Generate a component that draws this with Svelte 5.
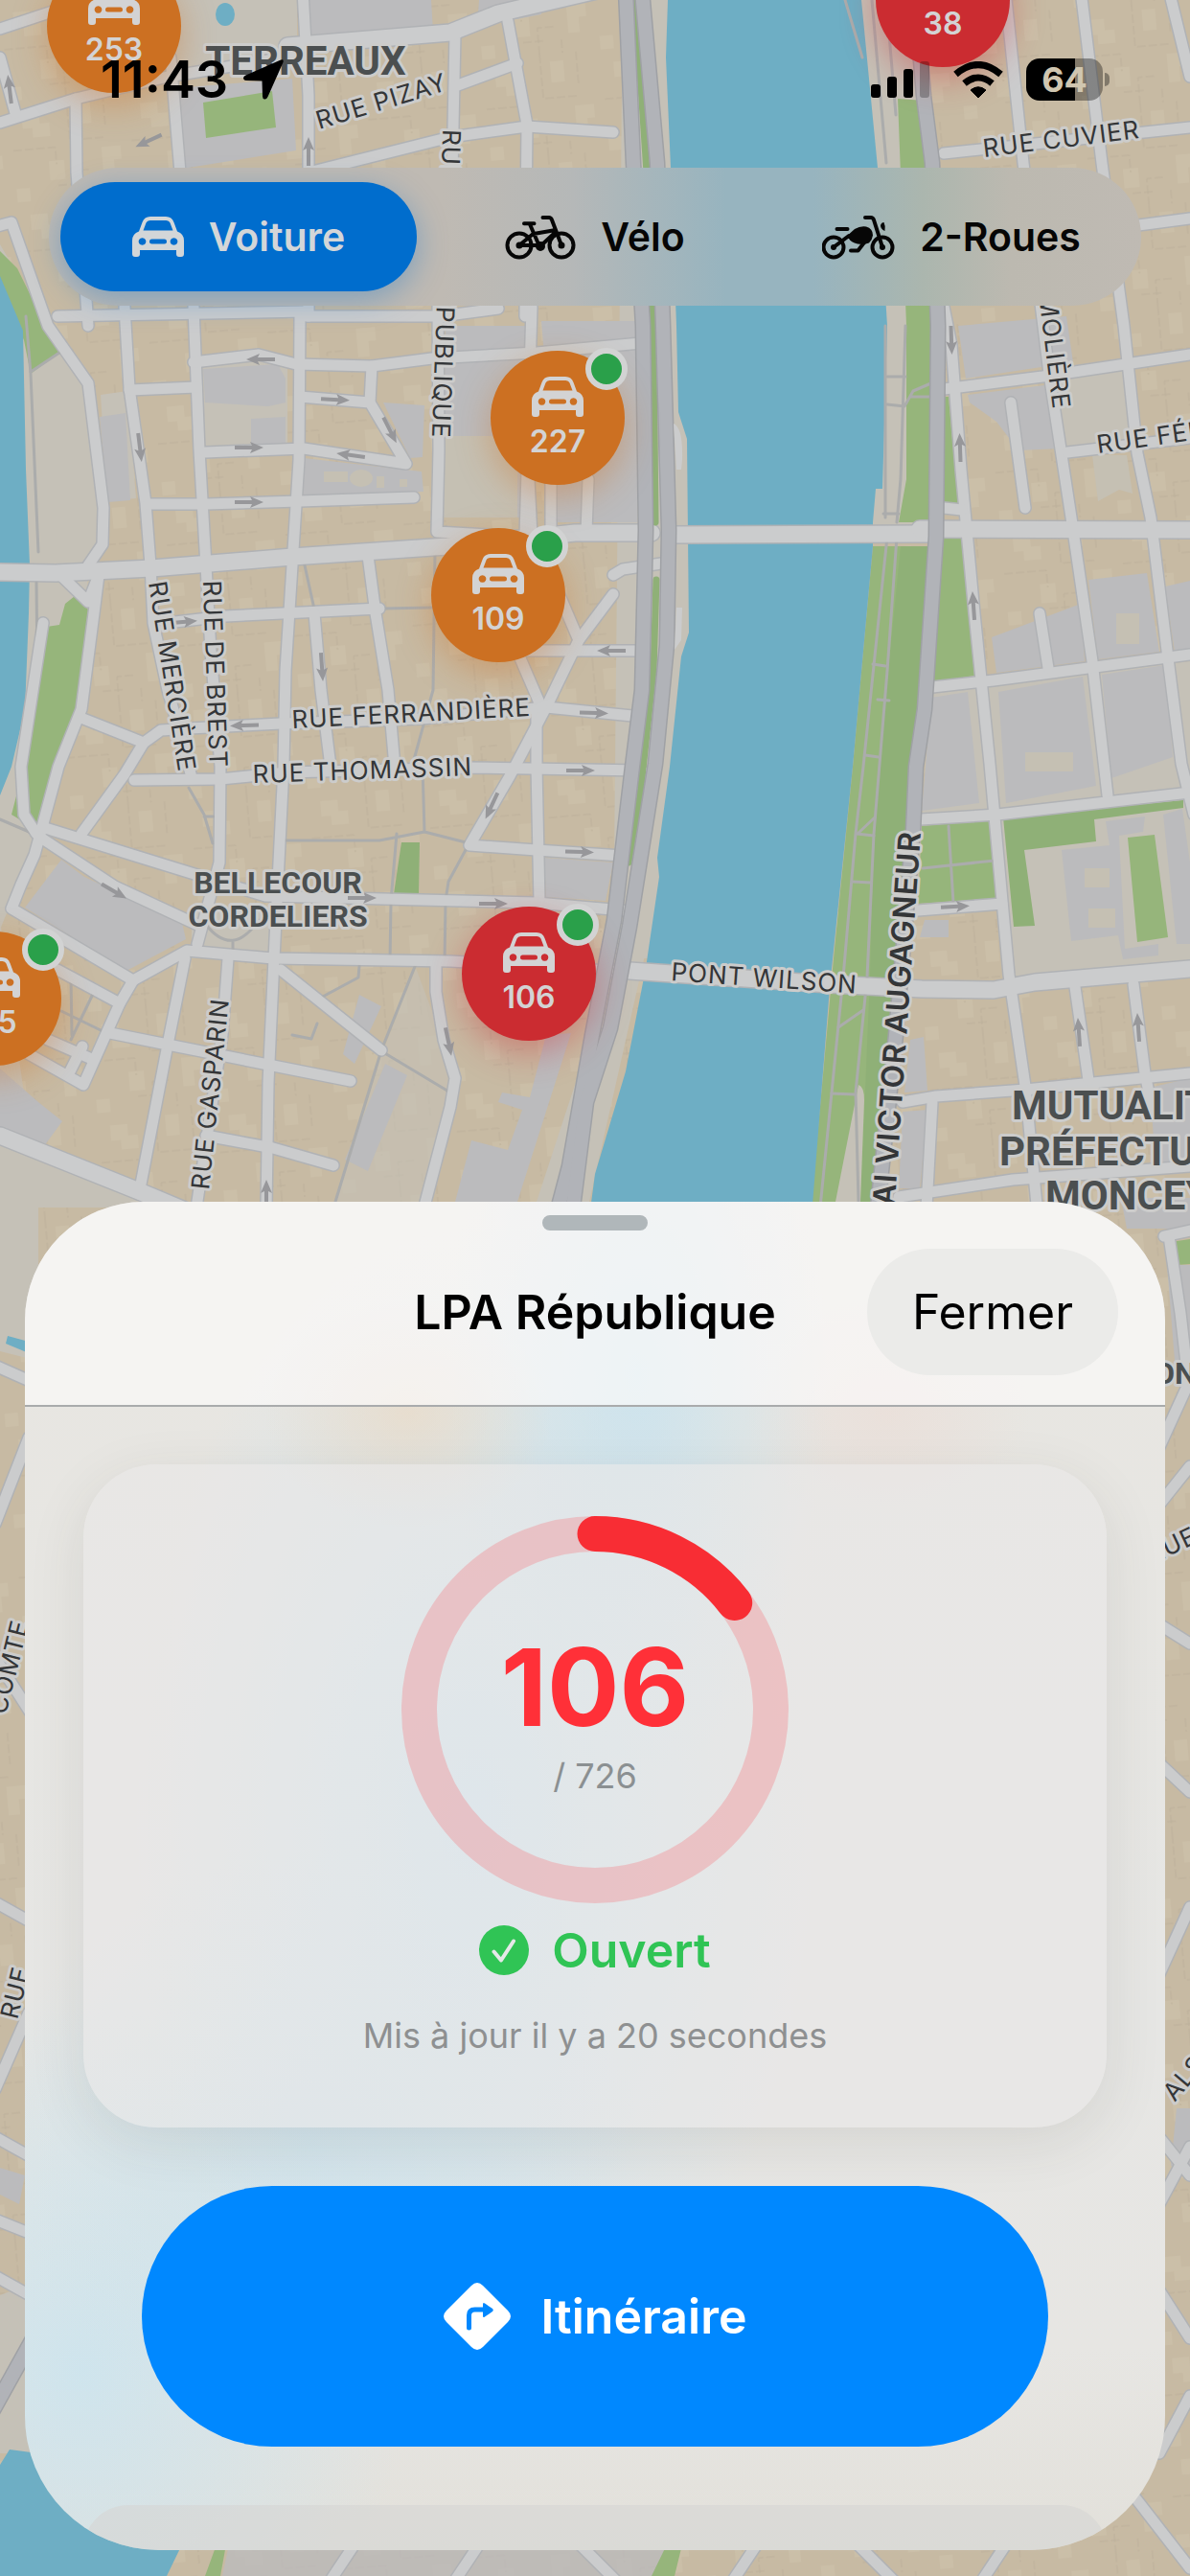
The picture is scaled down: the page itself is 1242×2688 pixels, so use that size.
<script lang="ts">
	/**
	 * Parking screen: city map with live pins, vehicle switcher and detail sheet
	 */

	type PinTone = 'orange' | 'red';

	interface Pin {
		x: number;
		y: number;
		free: number;
		tone: PinTone;
		open: boolean;
	}

	interface Label {
		text: string;
		x: number;
		y: number;
		angle?: number;
		kind?: 'street' | 'avenue' | 'district' | 'quarter';
		anchor?: 'start' | 'end' | 'middle';
	}

	const MAP_WIDTH = 1242;
	const MAP_HEIGHT = 2688;

	const parking = { name: 'LPA République', free: 106, total: 726, updated: 'Mis à jour il y a 20 secondes' };

	const modes = [
		{ id: 'car', label: 'Voiture' },
		{ id: 'bike', label: 'Vélo' },
		{ id: 'moto', label: '2-Roues' }
	];

	let mode = $state('car');

	const share = $derived((parking.free / parking.total) * 100);

	const pins: Pin[] = [
		{ x: 119, y: 27, free: 253, tone: 'orange', open: false },
		{ x: 984, y: 0, free: 38, tone: 'red', open: false },
		{ x: 582, y: 436, free: 227, tone: 'orange', open: true },
		{ x: 520, y: 621, free: 109, tone: 'orange', open: true },
		{ x: 552, y: 1016, free: 106, tone: 'red', open: true },
		{ x: -6, y: 1042, free: 115, tone: 'orange', open: true }
	];

	// Two-way streets, widest first
	const wide = [
		'M0 597 58 598 158 593 305 581 467 570 600 556 680 556',
		'M700 558 971 557',
		'M960 552 1242 553',
		'M0 1185 145 1243 200 1266',
		'M300 48 470 34 520 14 640-14',
		'M657 1013 866 1027 962 1032 1037 1033 1080 1025 1242 1011'
	];

	const streets = [
		'M-10 238 12 232 50 340 92 400 108 530 107 568 92 590',
		'M60 597 92 628 103 600 98 640 85 740 61 800 44 863 36 892 22 923 12 948 139 1023 195 992 285 1000 470 1003 560 1008 650 1014',
		'M45 650 22 800 25 850 38 870',
		'M130 320 135 405 152 525 157 590 160 650 175 720 195 790 200 812',
		'M202 320 208 470 215 590 220 680 230 800 229 900 206 985',
		'M313 330 312 480 305 590 298 700 296 800 290 920 286 1000 280 1130 278 1260',
		'M202 378 270 370 309 380 388 382 451 374 560 368 680 357',
		'M135 407 205 404',
		'M388 382 386 420 424 484 317 468 214 472',
		'M313 414 386 420',
		'M155 526 215 526 313 523 432 519',
		'M174 650 235 643 396 635',
		'M384 580 392 640 405 720 412 800',
		'M328 640 335 720 345 800',
		'M87 750 150 775 168 762 198 760 293 755 440 750 570 738 670 748',
		'M150 775 130 808 85 870',
		'M140 814 230 813 300 806 490 801 670 804',
		'M44 863 206 913 277 935 400 938 560 942 650 950',
		'M44 875 120 925 206 965',
		'M457 320 458 470 456 555 545 560',
		'M555 320 548 560',
		'M575 500 575 555',
		'M614 500 612 555',
		'M560 738 560 800 563 942',
		'M640 620 604 668 570 738 532 810 490 882 560 887 650 893',
		'M575 600 604 668',
		'M540 680 565 738',
		'M540 679 670 679',
		'M555 560 552 500',
		'M139 1023 125 1047 87 1132 30 1100',
		'M60 1012 125 1047',
		'M50 1085 98 1106',
		'M72 1120 86 1092',
		'M193 1000 175 1090 145 1246',
		'M238 1000 232 1080 205 1260',
		'M115 1078 175 1090 285 1112 366 1128',
		'M215 1185 285 1198 348 1216',
		'M293 1012 398 1096',
		'M455 1005 455 1035 463 1085 475 1125 470 1155 440 1270',
		'M0 128 79 103 175 80 310 58',
		'M79 103 80 180 92 340',
		'M178 60 188 180',
		'M316-10 322 100 322 330',
		'M475 35 472 180',
		'M530 22 550 130 548 330',
		'M322 180 470 143 550 132 640 138',
		'M475 90 540 66',
		'M0 60 16 118',
		'M0 30 79 4',
		'M60 330 320 325',
		'M320 330 460 330 520 322',
		'M640 600 650 594 690 588',
		'M985 160 1242 133',
		'M1049-10 1068 170 1095 390 1118 540 1140 690 1156 830',
		'M1128-10 1150 170 1173 340 1187 473 1201 540 1219 687 1233 797 1246 850',
		'M1220-10 1242 80',
		'M1150 240 1242 228',
		'M985 320 993 360 1003 490 1017 640 1033 797 1053 1017 1070 1133 1082 1257',
		'M985 406 1088 393 1242 370',
		'M1114 472 1242 457',
		'M985 530 1004 532',
		'M973 717 1037 710 1242 683',
		'M961 855 1041 850 1242 827',
		'M958 950 1046 943',
		'M942 1150 977 1144 1070 1137 1242 1120',
		'M938 1249 1057 1231 1242 1217',
		'M973 1150 967 1260',
		'M1122 1030 1136 1127',
		'M1183 1027 1195 1120 1203 1160',
		'M1055 420 1070 530',
		'M1085 640 1094 697',
		// Slivers left and right of the sheet
		'M-5 1425 40 1445',
		'M30 1500-5 1590',
		'M-5 1730 40 1800',
		'M-5 1985 40 2010',
		'M30 2100-5 2180',
		'M-5 2230 40 2255',
		'M-5 2316 40 2334',
		'M-5 2375 40 2400',
		'M1215 1290 1242 1284',
		'M1220 1290 1232 1370 1240 1440',
		'M1242 1440 1210 1510',
		'M1210 1570 1242 1530',
		'M1210 1695 1242 1715',
		'M1210 1840 1242 1870',
		'M1242 1990 1210 2060',
		'M1210 2230 1242 2270',
		'M1242 2240 1210 2300',
		'M1210 2390 1242 2440',
		'M1242 2500 1210 2560',
		'M1180 2600 1242 2680',
		'M340 2700 380 2640',
		'M470 2700 510 2640',
		'M590 2640 650 2700',
		'M760 2700 800 2640',
		'M880 2640 940 2700',
		'M1020 2700 1060 2640'
	];

	const highways = [
		'M653-10 661 170 671 340 674 553 670 720 660 800 641 960 618 1080 594 1217 580 1270',
		'M670-10 686 170 692 340 698 553 696 673 684 797 657 967 637 1073 612 1150 598 1260',
		'M955-10 964 100 973 170 979 340 977 560 965 740 956 800 953 867 935 1080 915 1270',
		'M-10 2520 40 2430'
	];

	const paths = [
		'M27 330 32 390 40 576',
		'M32 388 62 368',
		'M38 608 39 700 30 770',
		'M0 855 42 873',
		'M926 560 901 800 893 870 880 1020 868 1140 856 1260',
		'M936 560 926 700 912 870 905 1020 893 1140 896 1254',
		'M916 730 928 731M911 693 924 695M903 788 917 790M895 870 913 853M894 870 912 872M890 920 909 921M875 1072 901 1054M868 1141 892 1142',
		'M924 340 924 540M945 340 940 500 936 545M926 393 945 393M926 422 944 424 953 408 974 399M951 414 974 414M922 536 938 536',
		'M990 862 995 942M963 906 1038 898',
		'M197 822 213 850 222 880M213 852 223 852M297 877 396 877 443 868 441 800M443 868 490 880M414 870 408 940M487 885 468 920 465 940',
		'M408 942 407 1003M465 942 464 1003',
		'M434 1006 398 1096 350 1254M400 1098 470 1140',
		'M375 1008 374 1020 333 1042M305 1080 325 1084 331 1068',
		'M318 590 329 640M400 635 450 634M454 575 452 720 430 800',
		'M215 965Q243 1000 270 960M243 982 243 992',
		'M64 1055 105 1075M74 1020 75 1080M98 1035 74 1085',
		'M910 0 925 170M925 0 935 120M882 0 900 60'
	];

	const arrows = [
		[10, 93, -97], [155, 147, 155], [322, 158, -90], [272, 375, 180], [350, 417, 3], [146, 467, 83],
		[260, 467, 0], [366, 475, 188], [407, 449, 63], [260, 524, 0], [191, 649, -5], [336, 696, 86],
		[255, 757, 178], [513, 841, 115], [119, 930, 30], [378, 937, 0], [515, 943, 0], [606, 804, 0],
		[605, 889, 2], [620, 744, 2], [468, 1087, 78], [278, 1246, -90], [638, 679, 180], [993, 355, 88],
		[1002, 467, -92], [1016, 632, -94], [997, 946, -3], [1126, 1077, -94], [1188, 1072, -94]
	];

	const labels: Label[] = [
		{ text: 'TERREAUX', x: 319, y: 78, kind: 'district', anchor: 'middle' },
		{ text: 'BELLECOUR', x: 290, y: 932, kind: 'quarter', anchor: 'middle' },
		{ text: 'CORDELIERS', x: 290, y: 967, kind: 'quarter', anchor: 'middle' },
		{ text: 'MUTUALITÉ', x: 1056, y: 1168, kind: 'district' },
		{ text: 'PRÉFECTURE', x: 1043, y: 1216, kind: 'district' },
		{ text: 'MONCEY', x: 1091, y: 1262, kind: 'district' },
		{ text: 'RUE PIZAY', x: 333, y: 135, angle: -17 },
		{ text: 'RUE CUVIER', x: 1027, y: 164, angle: -7 },
		{ text: 'RUE FERRANDIÈRE', x: 305, y: 760, angle: -3 },
		{ text: 'RUE THOMASSIN', x: 264, y: 817, angle: -2 },
		{ text: 'RUE MERCIÈRE', x: 155, y: 608, angle: 81 },
		{ text: 'RUE DE BREST', x: 212, y: 606, angle: 88 },
		{ text: 'RUE DE LA RÉPUBLIQUE', x: 451, y: 457, angle: 92, anchor: 'end' },
		{ text: 'RUE MOLIÈRE', x: 1099, y: 428, angle: 83, anchor: 'end' },
		{ text: 'RUE FÉNELON', x: 1146, y: 473, angle: -8 },
		{ text: 'RUE GASPARIN', x: 218, y: 1242, angle: -84 },
		{ text: 'PONT WILSON', x: 700, y: 1023, angle: 4 },
		{ text: 'QUAI VICTOR AUGAGNEUR', x: 961, y: 868, angle: -86, kind: 'avenue', anchor: 'end' },
		{ text: 'ON', x: 1204, y: 1444, kind: 'quarter' },
		{ text: 'RUE', x: 1202, y: 1632, angle: -25 },
		{ text: 'COMTE', x: 6, y: 1790, angle: -76 },
		{ text: 'RUE', x: 18, y: 2108, angle: -76 },
		{ text: 'ALSACE', x: 1226, y: 2194, angle: -50 }
	];
</script>

{#snippet carIcon()}
	<svg class="icon-car" viewBox="0 0 54 42" aria-hidden="true">
		<path
			fill="currentColor"
			fill-rule="evenodd"
			d="M7 15.500 10.500 6Q12.500 0 19 0H35Q41.500 0 43.500 6L47 15.500Q54 18 54 25V39a3 3 0 0 1-3 3h-2a3 3 0 0 1-3-3v-4H8v4a3 3 0 0 1-3 3H3a3 3 0 0 1-3-3V25Q0 18 7 15.500ZM11.500 14.500h31L39.500 6.500Q38.500 4 35.500 4h-17Q15.500 4 14.500 6.500ZM10.500 22.200a3.800 3.800 0 1 0 .01 0ZM43.500 22.200a3.800 3.800 0 1 0 .01 0ZM20.500 23.500a2.500 2.500 0 0 0 0 5h13a2.500 2.500 0 0 0 0-5Z"
		/>
	</svg>
{/snippet}

{#snippet bikeIcon()}
	<svg class="icon-bike" viewBox="0 0 74 47" aria-hidden="true">
		<g fill="none" stroke="currentColor" stroke-width="4" stroke-linecap="round" stroke-linejoin="round">
			<circle cx="15" cy="32" r="12.500" />
			<circle cx="59" cy="32" r="12.500" />
			<path d="M39.500 3H46Q48 3 49 5.500L59 32M20 9.300H30.500M26 10 36 33M30 20 53 16M53 18 38 32M15 32H35M15 32 30 19.500" />
			<circle cx="37" cy="33" r="3" />
		</g>
		<circle cx="15" cy="32" r="3.500" fill="currentColor" />
		<circle cx="59" cy="32" r="3.500" fill="currentColor" />
	</svg>
{/snippet}

{#snippet motoIcon()}
	<svg class="icon-moto" viewBox="0 0 76 47" aria-hidden="true">
		<g fill="none" stroke="currentColor" stroke-width="4" stroke-linecap="round" stroke-linejoin="round">
			<circle cx="12" cy="34" r="10.500" />
			<circle cx="63" cy="34" r="10.500" />
			<path d="M45 3H51Q53 3 54 5.500L63 34M15.500 15H26.500M12 34 28 22M30 37.500H37.500L44 29" />
		</g>
		<path d="M24 24 34 15Q40 11.500 46 12.500 53 14.500 53 21.500 52.500 26 49 29.500 44 31.500 37 30.500 30 28.500 28 25Z" fill="currentColor" />
		<path d="M61 11Q62 8 64.500 8 66.500 12 65.500 17 61 15 61 11Z" fill="currentColor" />
		<circle cx="12" cy="34" r="3" fill="currentColor" />
		<circle cx="63" cy="34" r="3" fill="currentColor" />
	</svg>
{/snippet}

<main class="screen">
	<div class="map">
		<svg class="map__canvas" viewBox="0 0 {MAP_WIDTH} {MAP_HEIGHT}" role="img" aria-label="Carte">
			<defs>
				<pattern id="blocks" width="124" height="106" patternUnits="userSpaceOnUse" patternTransform="rotate(-5)">
					<rect width="124" height="106" fill="#c7baa3" />
					<path d="M12 14h18v12h10v14H22V30H12ZM70 8h14v22H70ZM92 56h20v14h-8v16H92ZM36 66h16v20H36ZM0 92h14v14H0Z" fill="#cbbfa8" />
					<path d="M60 0v46h38M0 52h44v18M98 0v34M60 106V78h20M44 92h22M84 92v14" fill="none" stroke="#bdb19b" stroke-dasharray="9 3" />
				</pattern>
			</defs>

			<rect width="1242" height="2688" fill="url(#blocks)" />

			<!-- Open ground and public buildings -->
			<g fill="#c5c1b7">
				<path d="M0 255 50 340 90 400 107 570 92 600 80 740 44 863 0 970Z" />
				<path d="M140 0H310V60L175 80Z" />
				<path d="M0 960 40 1250 0 1400ZM0 1190 190 1260H0Z" />
				<path d="M697 0 716 0 740 700 615 1254H560L640 1010 690 560Z" />
				<path d="M650-5H706V1000H640Z" />
				<path d="M1045 855 1242 832V1012L1056 1020Z" />
				<path d="M895-5H955L979 330V560H905Z" />
				<path d="M1037 715 1242 690V825L1041 848 962 852 973 720Z" />
				<path d="M1095 390 1173 380 1184 460 1108 470ZM208 372H300V466H212ZM105 412 133 408 142 520 112 523Z" />
				<path d="M200 950H290V1000H200Z" />
				<path d="M400 1096 434 1010 475 1120 440 1254H350Z" opacity=".6" />
				<path d="M0 1254H40V1420L0 1410ZM0 2395 40 2380V2560H0Z" />
			</g>
			<g fill="#bbbbbd">
				<path d="M320 0H450L452 33 320 44ZM500 0H565V15L498 28Z" />
				<path d="M184 92 305 82 309 157 190 176Z" />
				<path d="M212 385 290 380 298 395V420L280 424 214 420ZM262 437 298 435V466H262Z" />
				<path d="M317 478 440 492 442 513 316 518ZM400 420 443 423 441 477 428 478Z" />
				<path d="M104 435 131 431 136 522 113 524Z" />
				<path d="M64 897 88 915 190 963 194 980 132 1013 26 947Z" />
				<path d="M0 1115 40 1150 65 1170 46 1196 0 1178Z" />
				<path d="M465 340H555V540H462ZM565 335H665V545H582ZM568 895 640 900 632 940 570 936Z" />
				<path d="M375 1038 398 1050 370 1110 358 1100ZM402 1110 425 1122 384 1222 360 1210Z" />
				<path d="M570 1080 596 1078 540 1254H475L492 1190 530 1200 545 1158 520 1150 524 1140 553 1145Z" />
				<path d="M1000 340 1113 330 1120 378 1008 395ZM1010 412 1090 402 1108 468 1063 470 1040 440 1012 420Z" />
				<path d="M1035 665 1128 630 1132 690 1040 702ZM1136 605 1197 598 1210 680 1146 688ZM1216 612 1242 606V680L1226 680Z" />
				<path d="M1042 722 1130 706 1144 820 1050 838ZM1150 704 1216 694 1224 790 1160 812ZM972 728 1010 722 1022 838 962 846Z" />
				<path d="M1108 887 1158 882 1154 857 1195 852 1193 868 1168 872 1174 990 1209 985V997L1172 1001 1167 976 1118 982ZM1214 850 1234 844 1242 900V985L1228 985Z" />
				<path d="M950 1085 964 1082 968 1138 944 1140ZM942 1160 968 1158 960 1240 938 1240Z" />
				<path d="M1200 1135 1242 1125V1210L1206 1214ZM1170 1250H1242V1282H1176Z" />
				<path d="M965 960H990V978H960Z" />
				<path d="M240 2650H700V2688H232Z" opacity=".75" />
				<path d="M0 2262 26 2270 20 2300 0 2290ZM1218 1320H1242V1420H1226ZM1228 2200H1242V2260H1222Z" />
			</g>
			<g fill="#c5c0b3">
				<path d="M338 492h25v11h-25ZM393 497h8v12h-8ZM417 500h8v8h-8Z" />
				<ellipse cx="377" cy="499" rx="12" ry="9" />
				<path d="M1132 906h26v20h-26ZM1136 948h28v20h-28ZM1165 640h24v32h-24ZM1070 785h50v20h-50Z" />
				<path d="M1140 475h36l6 40-14-4-22 12Z" />
				<path d="M462 455H540V540H462Z" />
			</g>

			<!-- Parks -->
			<g fill="#96b57b">
				<path d="M0 262 18 280 45 335 62 368 32 390 25 355 0 300Z" />
				<path d="M212 107 284 95 288 133 215 144Z" />
				<path d="M78 622 92 636 84 740 60 800 44 860 32 862 12 850 30 780 42 655 62 652 68 630Z" />
				<path d="M937 103 965 105 979 340 977 545H938L946 500V340Z" />
				<path d="M911 570H976L955 800 953 870 915 1254H847L870 1000 890 800Z" />
				<path d="M990 414 1000 525 983 527V414ZM985 560 1004 562 1017 705 973 712Z" />
				<path d="M962 862 1035 855 1043 937 958 943Z" />
				<path d="M1177 874 1205 871 1219 978 1187 983Z" />
				<path d="M1222 1296 1242 1293V1319L1228 1320Z" />
				<path d="M214 2688 226 2655H236L230 2688ZM680 2688 696 2655H712L704 2688Z" />
			</g>
			<g fill="#8fb077">
				<path d="M1047 853 1235 835V843L1142 855 1144 878 1069 887 1080 966 1058 967Z" />
				<path d="M419 879H438L437 933H411Z" />
				<path d="M940 570H976L955 800 953 870 915 1254H898L908 1020 912 860 928 690Z" />
			</g>
			<path d="M896 1132Q902 1134 902 1148L898 1254H872Z" fill="#c5c1b7" />

			<!-- Water -->
			<g fill="#6eaec4">
				<path d="M0 288 24 345 27 490 31 590 30 640 26 740 12 800 0 830Z" />
				<path
					d="M697 0 695 60 700 175 706 340 708 430 717 458 719 660 711 685 699 800 686 895 688 915 674 1010 653 1118 621 1225 615 1270H847L866 1030 890 800 911 570V545L914 510H921L926 340 916 175 899 0Z"
				/>
				<ellipse cx="235" cy="15" rx="10" ry="12" />
				<path d="M8 1394 30 1400V1412L6 1402Z" />
				<path d="M0 2572 10 2556 40 2560 190 2655 174 2688H0Z" />
			</g>

			<g class="casing casing--wide">{#each wide as d}<path {d} />{/each}</g>
			<g class="casing">{#each streets as d}<path {d} />{/each}</g>
			<g class="path">{#each paths as d}<path {d} />{/each}</g>
			<g class="street">{#each streets as d}<path {d} />{/each}</g>
			<g class="street street--wide">{#each wide as d}<path {d} />{/each}</g>
			<path class="median" d="M663 0 675 180 682 350 684 545M685 605 682 700 668 830 656 900" />
			<g class="casing casing--highway">{#each highways as d}<path {d} />{/each}</g>
			<g class="highway">{#each highways as d}<path {d} />{/each}</g>
			<path d="M703 442Q713 446 712 480L711 490H706ZM706 634H712L711 668 704 678Z" fill="#cbcccd" />

			<g fill="#97979a">
				{#each arrows as [x, y, angle]}
					<path d="M-15-2H3L1-6 15 0 1 6 3 2H-15Z" transform="translate({x} {y}) rotate({angle})" />
				{/each}
			</g>

			{#each labels as label}
				<text
					class="label label--{label.kind ?? 'street'}"
					text-anchor={label.anchor ?? 'start'}
					transform="translate({label.x} {label.y}) rotate({label.angle ?? 0})">{label.text}</text
				>
			{/each}
		</svg>

		{#each pins as pin}
			<button
				class="pin pin--{pin.tone}"
				style="left: {(pin.x / MAP_WIDTH) * 100}%; top: {(pin.y / MAP_HEIGHT) * 100}%"
				aria-label="{pin.free} places"
			>
				{@render carIcon()}
				<span class="pin__count">{pin.free}</span>
				{#if pin.open}<span class="pin__dot"></span>{/if}
			</button>
		{/each}
	</div>

	<header class="status">
		<div class="status__group">
			<span class="status__time">11:43</span>
			<svg width="42" height="42" viewBox="0 0 42 42" aria-hidden="true">
				<path d="M39 .5Q42.500-.5 41.500 3L25.500 39Q24 42 22 41.500T20 38.500L19.500 22.500 3 22Q0 21.500 0 19.500T2.500 16.500Z" />
			</svg>
		</div>
		<div class="status__group status__group--right">
			<svg width="62" height="38" viewBox="0 0 62 38" aria-hidden="true">
				<rect y="24" width="10" height="14" rx="3" />
				<rect x="17" y="16" width="10" height="22" rx="3" />
				<rect x="34" y="8" width="10" height="30" rx="3" />
				<rect x="51" width="10" height="38" rx="3" opacity=".25" />
			</svg>
			<svg width="54" height="38" viewBox="0 0 54 38" aria-hidden="true">
				<path d="M27 38 19 30Q27 23.500 35 30Z" stroke="#000" stroke-linejoin="round" />
				<path d="M12.500 23Q27 11 41.500 23M3.500 13.500Q27-6.500 50.500 13.500" fill="none" stroke="#000" stroke-width="7" />
			</svg>
			<div class="battery"><span class="battery__level">64</span></div>
		</div>
	</header>

	<nav class="modes" aria-label="Type de véhicule">
		{#each modes as item}
			<button
				class="modes__item"
				class:modes__item--active={mode === item.id}
				aria-pressed={mode === item.id}
				onclick={() => (mode = item.id)}
			>
				{#if item.id === 'car'}
					{@render carIcon()}
				{:else if item.id === 'bike'}
					{@render bikeIcon()}
				{:else}
					{@render motoIcon()}
				{/if}
				<span>{item.label}</span>
			</button>
		{/each}
	</nav>

	<section class="sheet">
		<div class="sheet__header">
			<div class="sheet__grabber"></div>
			<div class="sheet__bar">
				<h1 class="sheet__title">{parking.name}</h1>
				<button class="sheet__close">Fermer</button>
			</div>
		</div>

		<div class="sheet__body">
			<article class="card">
				<div class="gauge">
					<svg class="gauge__ring" viewBox="0 0 404 404" aria-hidden="true">
						<circle class="gauge__track" cx="202" cy="202" r="183.5" />
						<circle
							class="gauge__value"
							cx="202"
							cy="202"
							r="183.5"
							pathLength="100"
							stroke-dasharray="{share} 100"
							transform="rotate(-90 202 202)"
						/>
					</svg>
					<strong class="gauge__free">{parking.free}</strong>
					<span class="gauge__total">/ {parking.total}</span>
				</div>
				<p class="card__state">
					<svg width="52" height="52" viewBox="0 0 52 52" aria-hidden="true">
						<circle cx="26" cy="26" r="26" fill="currentColor" />
						<path d="M15.500 27.500 23 36.500 36 16.500" fill="none" stroke="#e5e8e8" stroke-width="4" stroke-linecap="round" stroke-linejoin="round" />
					</svg>
					<span>Ouvert</span>
				</p>
				<p class="card__updated">{parking.updated}</p>
			</article>

			<button class="route">
				<svg width="70" height="70" viewBox="0 0 70 70" aria-hidden="true">
					<path d="M29 3Q35-3 41 3L67 29Q73 35 67 41L41 67Q35 73 29 67L3 41Q-3 35 3 29Z" fill="#fff" />
					<path d="M26.500 47V34Q26.500 28 32.500 28H42" fill="none" stroke="#0088ff" stroke-width="5" stroke-linecap="round" />
					<path d="M41 22.500Q41 20 43 21.500L51 27Q52.500 28.500 51 30L43 35.500Q41 37 41 34.500Z" fill="#0088ff" />
				</svg>
				<span>Itinéraire</span>
			</button>

			<div class="card card--next"></div>
		</div>
	</section>
</main>

<style>
	:global(body) {
		background: #c5c1b7;
	}

	.screen {
		position: relative;
		display: flex;
		flex-direction: column;
		min-height: 100vh;
		overflow: hidden;
		font-family: Inter, Roboto, sans-serif;
		color: #000;
	}

	button {
		border: 0;
		padding: 0;
		font: inherit;
		color: inherit;
		cursor: pointer;
	}

	/* Map */
	.map {
		position: absolute;
		top: 0;
		left: 0;
		width: 100%;
	}

	.map__canvas {
		display: block;
		width: 100%;
	}

	.casing,
	.street,
	.path,
	.highway,
	.median {
		fill: none;
		stroke-linejoin: round;
		stroke-linecap: round;
	}

	.casing {
		stroke: #b0b2b5;
		stroke-width: 14px;
	}

	.street {
		stroke: #cbcccd;
		stroke-width: 11px;
	}

	.casing--wide {
		stroke-width: 20px;
	}

	.street--wide {
		stroke-width: 17px;
	}

	.path {
		stroke: #abacac;
		stroke-width: 3px;
	}

	.median {
		stroke: #8fb077;
		stroke-width: 7px;
	}

	.casing--highway {
		stroke: #9fa1a5;
		stroke-width: 17px;
	}

	.highway {
		stroke: #b1b3b8;
		stroke-width: 14px;
	}

	.label {
		font-size: 26px;
		letter-spacing: 1px;
		fill: #343638;
		stroke: #cccccb;
		stroke-width: 6px;
		stroke-linejoin: round;
		paint-order: stroke;
	}

	.label--avenue {
		font-size: 32px;
		font-weight: 600;
	}

	.label--quarter,
	.label--district {
		font-family: Roboto, 'Liberation Sans', sans-serif;
		font-weight: 700;
		letter-spacing: 0;
		fill: #4b4f50;
	}

	.label--quarter {
		font-size: 32px;
	}

	.label--district {
		font-size: 42px;
	}

	/* Pins */
	.pin {
		position: absolute;
		display: flex;
		flex-direction: column;
		align-items: center;
		justify-content: center;
		gap: 8px;
		width: 140px;
		height: 140px;
		border-radius: 50%;
		color: #d3d3d4;
		transform: translate(-50%, -50%);
	}

	.pin--orange {
		background: #cc7022;
		box-shadow: 0 12px 36px rgba(204, 112, 34, 0.4);
	}

	.pin--red {
		background: #cb2c31;
		box-shadow: 0 12px 36px rgba(203, 44, 49, 0.4);
	}

	.pin__count {
		font-size: 32px;
		font-weight: 600;
		line-height: 36px;
	}

	.pin__dot {
		position: absolute;
		top: -3px;
		right: -3px;
		width: 32px;
		height: 32px;
		border: 6px solid #d2d3d3;
		border-radius: 50%;
		background: #2aa04a;
	}

	.icon-car {
		width: 54px;
		height: 42px;
	}

	.icon-bike {
		width: 74px;
		height: 47px;
	}

	.icon-moto {
		width: 76px;
		height: 47px;
	}

	/* Status bar */
	.status {
		position: relative;
		display: flex;
		align-items: center;
		justify-content: space-between;
		height: 166px;
		margin-bottom: 9px;
		padding: 0 84px 0 105px;
	}

	.status__group {
		display: flex;
		align-items: center;
		gap: 16px;
	}

	.status__group--right {
		gap: 23px;
	}

	.status__time {
		font-size: 54px;
		font-weight: 600;
		line-height: 64px;
	}

	.battery {
		display: flex;
		align-items: center;
		gap: 2px;
	}

	.battery::after {
		content: '';
		width: 5px;
		height: 14px;
		border-radius: 0 7px 7px 0;
		background: rgba(0, 0, 0, 0.35);
	}

	.battery__level {
		width: 80px;
		border-radius: 14px;
		background: linear-gradient(90deg, #000 64%, rgba(0, 0, 0, 0.35) 64%);
		font-size: 36px;
		font-weight: 700;
		line-height: 44px;
		text-align: center;
		color: #d0c6b0;
	}

	/* Vehicle switcher */
	.modes {
		position: relative;
		display: flex;
		margin: 0 51px 48px;
		padding: 15px 12px;
		border-radius: 72px;
		background: linear-gradient(90deg, #bfbab3 0%, #bfbab3 36%, #b5b8b8 48%, #97b4bf 62%, #97b4bf 70%, #abb6ae 80%, #bcb9b0 88%, #bfbab3 100%);
	}

	.modes__item {
		display: flex;
		flex: 1;
		align-items: center;
		justify-content: center;
		gap: 26px;
		height: 114px;
		border-radius: 57px;
		background: none;
		font-size: 41px;
		font-weight: 600;
		color: #060606;
	}

	.modes__item--active {
		background: #006dcd;
		box-shadow: 0 8px 32px rgba(0, 109, 205, 0.35);
		color: #d3d6d8;
	}

	/* Detail sheet */
	.sheet {
		position: relative;
		margin: auto 26px 27px;
		border-radius: 124px 124px 140px 140px;
		overflow: hidden;
		background:
			radial-gradient(ellipse 150px 120px at 400px 220px, rgba(236, 216, 192, 0.6), transparent),
			radial-gradient(ellipse 150px 120px at 900px 220px, rgba(238, 216, 208, 0.4), transparent),
			radial-gradient(ellipse 200px 420px at 640px 180px, rgba(200, 227, 239, 0.8), transparent),
			radial-gradient(ellipse 360px 620px at 470px 640px, rgba(205, 228, 240, 0.95), transparent),
			radial-gradient(ellipse 340px 300px at 300px 980px, rgba(200, 226, 237, 0.6), transparent),
			radial-gradient(ellipse 340px 380px at 60px 1220px, rgba(204, 228, 238, 0.9), transparent),
			linear-gradient(#e8e6e1, #e6e6e4 60%, #e7e6e3 85%, #e2e0da);
	}

	.sheet__header {
		padding: 14px 49px 31px;
		border-bottom: 2px solid #a9abac;
		background: rgba(251, 250, 249, 0.7);
	}

	.sheet__grabber {
		width: 110px;
		height: 16px;
		margin: 0 auto 19px;
		border-radius: 8px;
		background: #b0b7ba;
	}

	.sheet__bar {
		display: grid;
		grid-template-columns: 1fr auto 1fr;
		align-items: center;
	}

	.sheet__title {
		grid-column: 2;
		margin: 0;
		font-size: 50px;
		font-weight: 600;
		line-height: 60px;
	}

	.sheet__close {
		justify-self: end;
		height: 132px;
		padding: 0 47px;
		border-radius: 66px;
		background: #ebebe9;
		font-size: 50px;
	}

	.sheet__body {
		display: flex;
		flex-direction: column;
		gap: 61px;
		padding: 60px 61px 0;
	}

	.card {
		display: flex;
		flex-direction: column;
		align-items: center;
		padding: 54px 40px 74px;
		border-radius: 76px;
		background: rgba(233, 232, 231, 0.6);
		box-shadow: 0 16px 60px rgba(60, 60, 50, 0.1);
	}

	.card--next {
		height: 47px;
		padding: 0;
		border-radius: 76px 76px 0 0;
		background: rgba(214, 214, 211, 0.6);
		box-shadow: none;
	}

	.gauge {
		position: relative;
		display: flex;
		flex-direction: column;
		align-items: center;
		justify-content: center;
		gap: 15px;
		box-sizing: border-box;
		width: 404px;
		height: 404px;
		padding-top: 10px;
	}

	.gauge__ring {
		position: absolute;
		inset: 0;
	}

	.gauge__track,
	.gauge__value {
		fill: none;
		stroke-width: 37px;
	}

	.gauge__track {
		stroke: rgba(245, 130, 135, 0.36);
	}

	.gauge__value {
		stroke: #f82d34;
		stroke-linecap: round;
	}

	.gauge__free {
		font-size: 112px;
		font-weight: 700;
		line-height: 112px;
		color: #ff3038;
	}

	.gauge__total {
		font-size: 36px;
		line-height: 44px;
		color: #8b9092;
	}

	.card__state {
		display: flex;
		align-items: center;
		gap: 24px;
		margin: 23px 0 0;
		font-size: 50px;
		font-weight: 600;
		line-height: 52px;
		color: #30c455;
	}

	.card__updated {
		margin: 41px 0 0;
		font-size: 36px;
		line-height: 44px;
		color: #8e9091;
	}

	.route {
		display: flex;
		align-items: center;
		justify-content: center;
		gap: 32px;
		height: 272px;
		margin: 0 61px;
		border-radius: 136px;
		background: #0088ff;
		font-size: 50px;
		font-weight: 600;
		color: #fff;
	}
</style>
